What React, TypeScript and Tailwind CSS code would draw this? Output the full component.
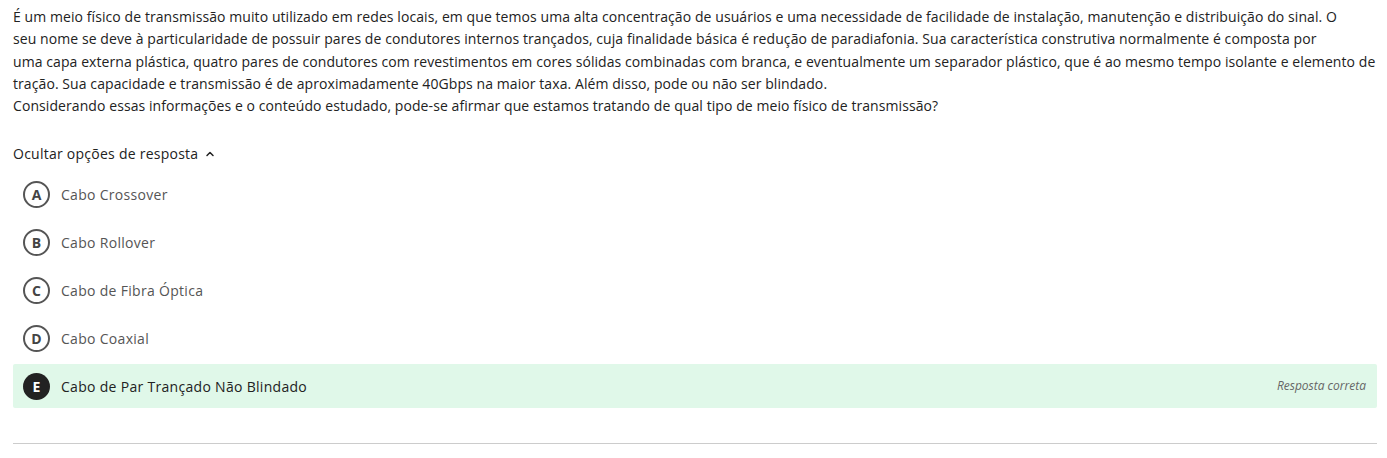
import { ChevronUp } from "lucide-react";

const options = [
  { letter: "A", text: "Cabo Crossover" },
  { letter: "B", text: "Cabo Rollover" },
  { letter: "C", text: "Cabo de Fibra Óptica" },
  { letter: "D", text: "Cabo Coaxial" },
  { letter: "E", text: "Cabo de Par Trançado Não Blindado", correct: true },
];

export default function App() {
  return (
    <div className="bg-white px-[13px] pt-[6px] pr-[8px] text-[#222] font-['Open_Sans',sans-serif]">
      <p className="text-[14px] leading-[22.3px] tracking-[0.08px]">
        É um meio físico de transmissão muito utilizado em redes locais, em que temos uma alta concentração de usuários e uma necessidade de facilidade de instalação, manutenção e distribuição do sinal. O
        <br />
        seu nome se deve à particularidade de possuir pares de condutores internos trançados, cuja finalidade básica é redução de paradiafonia. Sua característica construtiva normalmente é composta por
        <br />
        uma capa externa plástica, quatro pares de condutores com revestimentos em cores sólidas combinadas com branca, e eventualmente um separador plástico, que é ao mesmo tempo isolante e elemento de tração. Sua capacidade e transmissão é de aproximadamente 40Gbps na maior taxa. Além disso, pode ou não ser blindado.
        <br />
        Considerando essas informações e o conteúdo estudado, pode-se afirmar que estamos tratando de qual tipo de meio físico de transmissão?
      </p>

      <button className="mt-[26px] flex items-center gap-[6px] text-[14px] tracking-[0.25px] text-[#222]">
        Ocultar opções de resposta
        <ChevronUp size={12} strokeWidth={3} />
      </button>

      <div className="mt-[8px] mr-[2px] flex flex-col gap-[4px]">
        {options.map((o) => (
          <div
            key={o.letter}
            className={`flex h-[44px] items-center rounded-[2px] px-[10px] ${o.correct ? "bg-[#e0f8e9]" : ""}`}
          >
            <span
              className={`flex h-[27px] w-[27px] shrink-0 items-center justify-center rounded-full text-[14px] font-bold ${
                o.correct ? "bg-[#222] text-white" : "border-2 border-[#555] text-[#444]"
              }`}
            >
              {o.letter}
            </span>
            <span className={`ml-[11px] text-[14px] tracking-[0.3px] ${o.correct ? "text-[#222]" : "text-[#555]"}`}>{o.text}</span>
            {o.correct && (
              <span className="ml-auto pr-[1px] text-[12px] italic text-[#666]">Resposta correta</span>
            )}
          </div>
        ))}
      </div>

      <div className="mt-[35px] mr-[2px] border-t border-[#ccc]" />
    </div>
  );
}
